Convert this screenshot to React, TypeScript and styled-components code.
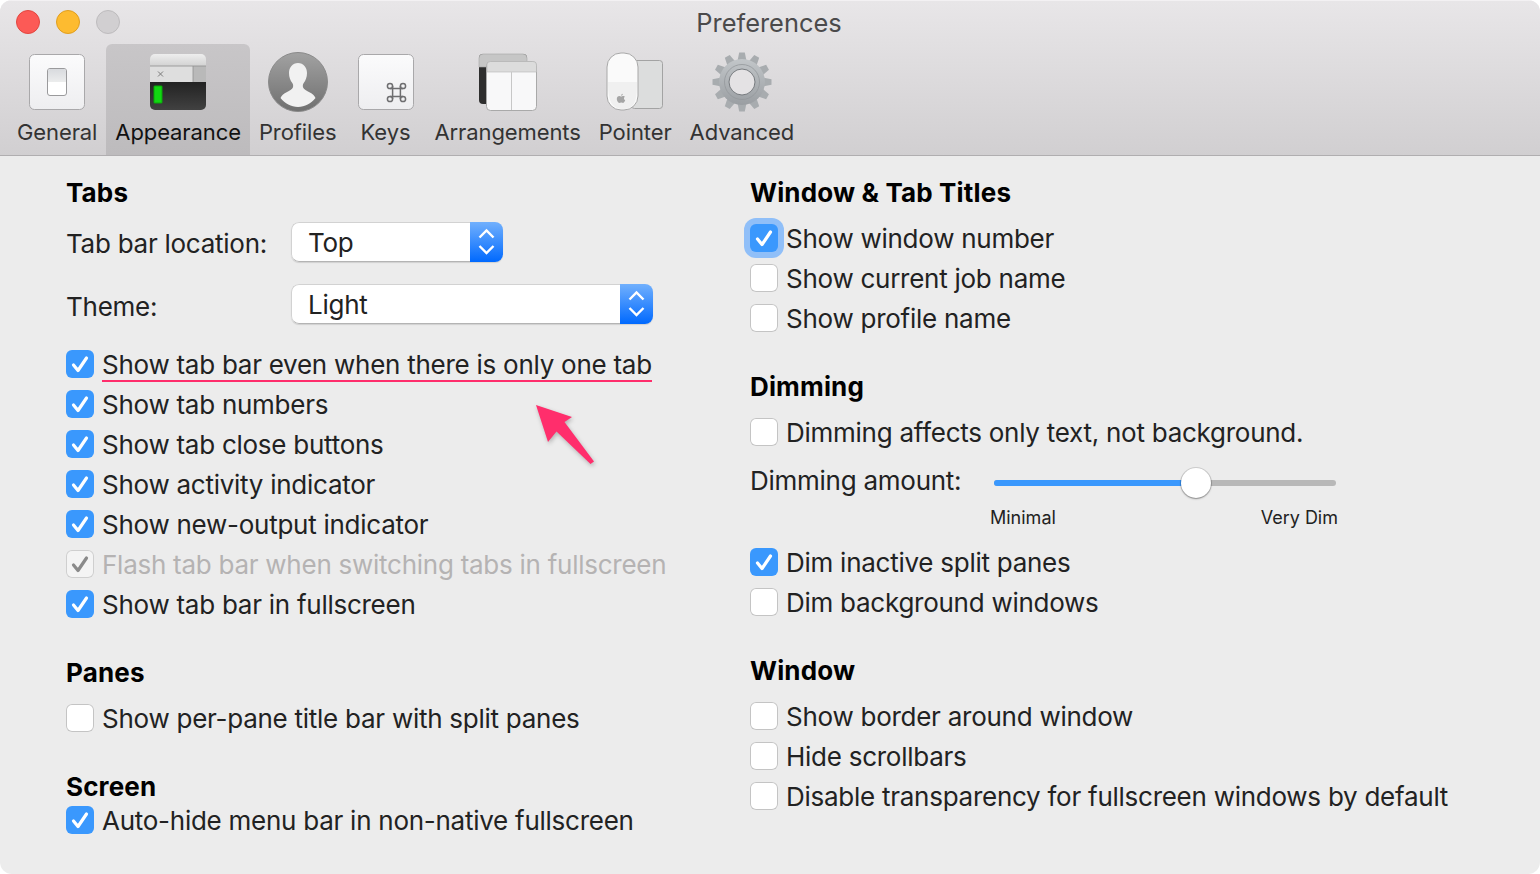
import React from 'react';
import styled, { createGlobalStyle } from 'styled-components';

const GlobalStyle = createGlobalStyle`
  html, body {
    margin: 0;
    padding: 0;
    background: #ffffff;
  }
  body {
    font-family: Inter, "Liberation Sans", sans-serif;
  }
`;

const GeneralIcon = () => (
  <svg width="60" height="60" viewBox="0 0 60 60">
    <defs>
      <linearGradient id="generalBg" x1="0" y1="0" x2="0" y2="1">
        <stop offset="0" stopColor="#fbfbfc" />
        <stop offset="1" stopColor="#eeeef0" />
      </linearGradient>
      <linearGradient id="generalKnob" x1="0" y1="0" x2="0" y2="1">
        <stop offset="0" stopColor="#d8dade" />
        <stop offset="1" stopColor="#eceded" />
      </linearGradient>
    </defs>
    <rect x="2.5" y="2.5" width="55" height="55" rx="5" fill="url(#generalBg)" stroke="#a9a8aa" />
    <rect x="20.5" y="16.5" width="19" height="27" rx="2.5" fill="#ffffff" stroke="#9a9a9c" />
    <path d="M21 19a2 2 0 0 1 2-2h14a2 2 0 0 1 2 2v11H21z" fill="url(#generalKnob)" />
  </svg>
);

const AppearanceIcon = () => (
  <svg width="60" height="60" viewBox="0 0 60 60">
    <defs>
      <linearGradient id="termBody" x1="0" y1="0" x2="0" y2="1">
        <stop offset="0" stopColor="#222222" />
        <stop offset="1" stopColor="#414141" />
      </linearGradient>
      <linearGradient id="termTitle" x1="0" y1="0" x2="0" y2="1">
        <stop offset="0" stopColor="#eeeeee" />
        <stop offset="1" stopColor="#d2d2d2" />
      </linearGradient>
    </defs>
    <path d="M2 30h56v23a5 5 0 0 1-5 5H7a5 5 0 0 1-5-5z" fill="url(#termBody)" />
    <path d="M2 7a5 5 0 0 1 5-5h46a5 5 0 0 1 5 5v7H2z" fill="url(#termTitle)" />
    <rect x="2" y="14" width="56" height="16" fill="#dedede" />
    <rect x="45" y="14" width="13" height="16" fill="#b9b9b9" />
    <path d="M45 14v16M2 14h56" stroke="#8f8f8f" strokeWidth="0.8" />
    <path d="M10 19.5l5 5M15 19.5l-5 5" stroke="#7c7c7c" strokeWidth="1" />
    <rect x="6" y="34" width="8" height="17" rx="0.5" fill="#12d612" stroke="#08a808" />
  </svg>
);

const ProfilesIcon = () => (
  <svg width="60" height="60" viewBox="0 0 60 60">
    <defs>
      <linearGradient id="profileBg" x1="0" y1="0" x2="0" y2="1">
        <stop offset="0" stopColor="#a2a2a2" />
        <stop offset="1" stopColor="#6f6f6f" />
      </linearGradient>
    </defs>
    <circle cx="30" cy="30" r="29.5" fill="url(#profileBg)" stroke="#8a8a8a" />
    <path
      d="M30 11c-5.5 0-9 4.500-9 10 0 4 1.300 7.500 3.300 10 .9 1.100 1.100 2.900 .6 4.500-.6 2-3.500 3.200-6.800 5-2.500 1.300-4.500 3-5.600 5.500C17 51.500 23 55 30 55s13-3.500 17.500-9c-1.100-2.500-3.100-4.200-5.600-5.500-3.300-1.800-6.200-3-6.800-5-.5-1.600-.3-3.400 .6-4.500 2-2.500 3.300-6 3.300-10 0-5.500-3.500-10-9-10z"
      fill="#f1f1f1"
    />
  </svg>
);

const KeysIcon = () => (
  <svg width="60" height="60" viewBox="0 0 60 60">
    <rect x="2.5" y="2.5" width="55" height="55" rx="5" fill="url(#generalBg)" stroke="#a9a8aa" />
    <g fill="none" stroke="#6e6e70" strokeWidth="1.5">
      <path d="M36.6 34V47M44.4 34V47M34 36.6H47M34 44.4H47" />
      <circle cx="34" cy="34" r="2.6" />
      <circle cx="47" cy="34" r="2.6" />
      <circle cx="34" cy="47" r="2.6" />
      <circle cx="47" cy="47" r="2.6" />
    </g>
  </svg>
);

const ArrangementsIcon = () => (
  <svg width="60" height="60" viewBox="0 0 60 60">
    <rect x="1" y="2" width="48" height="50" rx="4" fill="#2e2e2e" />
    <path d="M1 6a4 4 0 0 1 4-4h40a4 4 0 0 1 4 4v9H1z" fill="#c6c6c6" stroke="#a6a6a6" strokeWidth="0.6" />
    <rect x="8.5" y="9.5" width="50" height="49" rx="4" fill="#f8f8f9" stroke="#a9a9a9" />
    <path d="M9 13a3.5 3.5 0 0 1 3.500-3.500h42.500a3.500 3.500 0 0 1 3.500 3.500v7H9z" fill="#dcdcdc" stroke="#b5b5b5" strokeWidth="0.6" />
    <path d="M33.5 20v38" stroke="#c7c7c7" />
  </svg>
);

const PointerIcon = () => (
  <svg width="60" height="60" viewBox="0 0 60 60">
    <rect x="26.5" y="8.5" width="31" height="48" rx="3" fill="#dcdddd" stroke="#a3a3a3" />
    <rect x="2" y="1" width="31" height="57" rx="14" fill="#fafafa" stroke="#a8a8a8" />
    <path d="M3 30c0 18 3 27 15 27s14-9 14-27z" fill="#f0f0f0" />
    <path
      d="M16 44.5c1 0 1.300-.5 2.200-.5 .8 0 1.500 .5 1.700 .8-1.400 .9-1.200 2.900 .3 3.500-.5 1.200-1.300 2.700-2.300 2.700-.7 0-1-.4-1.800-.4s-1.100 .4-1.800 .4c-1.300 0-2.500-2.500-2.500-4 0-1.800 1.100-3 2.600-3 .6 0 1.100 .5 1.600 .5zM16 43.800c0-1 .8-1.900 1.800-2 .1 1.100-.8 2-1.800 2z"
      fill="#a5a5a5"
    />
  </svg>
);

const GEAR_TEETH = Array.from({ length: 12 }, (_, i) => i * 30);

const AdvancedIcon = () => (
  <svg width="60" height="60" viewBox="0 0 60 60">
    <defs>
      <linearGradient id="gearFill" x1="0" y1="0" x2="0" y2="1">
        <stop offset="0" stopColor="#c2c6c9" />
        <stop offset="1" stopColor="#9a9ea2" />
      </linearGradient>
    </defs>
    <g fill="#a8acaf">
      {GEAR_TEETH.map((deg) => (
        <path key={deg} d="M27.2 0.5h5.600l1.800 9h-9.200z" transform={`rotate(${deg} 30 30)`} />
      ))}
    </g>
    <circle cx="30" cy="30" r="23" fill="url(#gearFill)" />
    <circle cx="30" cy="30" r="17.5" fill="none" stroke="#94989c" strokeWidth="0.8" />
    <circle cx="30" cy="30" r="13" fill="#e4e2e4" stroke="#777b7f" strokeWidth="1" />
  </svg>
);

const TABS = [
  { name: 'General', icon: <GeneralIcon /> },
  { name: 'Appearance', icon: <AppearanceIcon />, selected: true },
  { name: 'Profiles', icon: <ProfilesIcon /> },
  { name: 'Keys', icon: <KeysIcon /> },
  { name: 'Arrangements', icon: <ArrangementsIcon /> },
  { name: 'Pointer', icon: <PointerIcon /> },
  { name: 'Advanced', icon: <AdvancedIcon /> },
];

const CheckMark = ({ color = '#ffffff' }: { color?: string }) => (
  <svg width="28" height="28" viewBox="0 0 28 28">
    <path d="M7.5 15l4.500 5.500L20.500 8" fill="none" stroke={color} strokeWidth="3.2" strokeLinecap="round" strokeLinejoin="round" />
  </svg>
);

type OptionProps = {
  label: string;
  checked?: boolean;
  disabled?: boolean;
  focused?: boolean;
  marked?: boolean;
};

const Option: React.FC<OptionProps> = ({ label, checked, disabled, focused, marked }) => (
  <OptionRow>
    <Box $checked={checked} $disabled={disabled} $focused={focused}>
      {checked && <CheckMark color={disabled ? '#8a8a8a' : '#ffffff'} />}
    </Box>
    <OptionLabel $disabled={disabled} $marked={marked}>
      {label}
    </OptionLabel>
  </OptionRow>
);

const Chevrons = () => (
  <svg width="33" height="40" viewBox="0 0 33 40">
    <path d="M9.500 15.500l7-7 7 7M9.500 24l7 7 7-7" fill="none" stroke="#ffffff" strokeWidth="2.400" />
  </svg>
);

const Select: React.FC<{ value: string; width: number }> = ({ value, width }) => (
  <SelectBox style={{ width }}>
    <SelectValue>{value}</SelectValue>
    <Stepper>
      <Chevrons />
    </Stepper>
  </SelectBox>
);

const App: React.FC = () => {
  const dimming = 59;

  return (
    <>
      <GlobalStyle />
      <Window>
        <Toolbar>
          <TitleBar>
            <Lights>
              <Light $color="#fc5a56" $edge="#e2463f" />
              <Light $color="#fdbb30" $edge="#e09e1f" />
              <Light $color="#d1cfd1" $edge="#bdbbbd" />
            </Lights>
            <Title>Preferences</Title>
          </TitleBar>
          <Tabs>
            {TABS.map((tab) => (
              <Tab key={tab.name} $selected={tab.selected}>
                {tab.icon}
                <TabLabel $selected={tab.selected}>{tab.name}</TabLabel>
              </Tab>
            ))}
          </Tabs>
        </Toolbar>

        <Content>
          <LeftColumn>
            <Heading>Tabs</Heading>
            <SelectRow>
              <SelectLabel $nudge={2}>Tab bar location:</SelectLabel>
              <Select value="Top" width={212} />
            </SelectRow>
            <SelectRow $gap={22}>
              <SelectLabel $nudge={5}>Theme:</SelectLabel>
              <Select value="Light" width={362} />
            </SelectRow>
            <OptionList $top={20}>
              <Option checked marked label="Show tab bar even when there is only one tab" />
              <Option checked label="Show tab numbers" />
              <Option checked label="Show tab close buttons" />
              <Option checked label="Show activity indicator" />
              <Option checked label="Show new-output indicator" />
              <Option checked disabled label="Flash tab bar when switching tabs in fullscreen" />
              <Option checked label="Show tab bar in fullscreen" />
            </OptionList>
            <Arrow width="64" height="64" viewBox="0 0 64 64">
              <polygon points="2,1 38,13 30.5,18 60,57.5 56.5,60 22.5,27.5 14,38" fill="#ff2e6c" />
            </Arrow>

            <Section>
              <Heading>Panes</Heading>
              <OptionList>
                <Option label="Show per-pane title bar with split panes" />
              </OptionList>
            </Section>

            <Section>
              <Heading>Screen</Heading>
              <OptionList $top={-4}>
                <Option checked label="Auto-hide menu bar in non-native fullscreen" />
              </OptionList>
            </Section>
          </LeftColumn>

          <RightColumn>
            <Heading>Window &amp; Tab Titles</Heading>
            <OptionList>
              <Option checked focused label="Show window number" />
              <Option label="Show current job name" />
              <Option label="Show profile name" />
            </OptionList>

            <Section>
              <Heading>Dimming</Heading>
              <OptionList>
                <Option label="Dimming affects only text, not background." />
              </OptionList>
              <SliderRow>
                <SliderLabel>Dimming amount:</SliderLabel>
                <Track>
                  <TrackFill style={{ width: `${dimming}%` }} />
                  <Thumb style={{ left: `${dimming}%` }} />
                </Track>
              </SliderRow>
              <TickLabels>
                <span>Minimal</span>
                <span>Very Dim</span>
              </TickLabels>
              <OptionList $top={12}>
                <Option checked label="Dim inactive split panes" />
                <Option label="Dim background windows" />
              </OptionList>
            </Section>

            <Section>
              <Heading>Window</Heading>
              <OptionList>
                <Option label="Show border around window" />
                <Option label="Hide scrollbars" />
                <Option label="Disable transparency for fullscreen windows by default" />
              </OptionList>
            </Section>
          </RightColumn>
        </Content>
      </Window>
    </>
  );
};

const Window = styled.div`
  width: 1540px;
  height: 874px;
  background: #ececec;
  border-radius: 12px;
  overflow: hidden;
  display: flex;
  flex-direction: column;
`;

const Toolbar = styled.header`
  height: 156px;
  box-sizing: border-box;
  border-top: 1px solid #f3f1f3;
  border-bottom: 1px solid #b0aeb0;
  background: linear-gradient(#e8e6e8, #d1cfd1);
  display: flex;
  flex-direction: column;
`;

const TitleBar = styled.div`
  height: 43px;
  flex: none;
  display: flex;
  align-items: center;
  justify-content: center;
  position: relative;
`;

const Lights = styled.div`
  position: absolute;
  left: 16px;
  top: 9px;
  display: flex;
  gap: 16px;
`;

const Light = styled.span<{ $color: string; $edge: string }>`
  width: 24px;
  height: 24px;
  box-sizing: border-box;
  border-radius: 50%;
  background: ${(p) => p.$color};
  border: 1px solid ${(p) => p.$edge};
`;

const Title = styled.div`
  font-size: 25.4px;
  color: #4b4a4b;
  margin-left: -2px;
`;

const Tabs = styled.nav`
  flex: 1;
  display: flex;
  padding-left: 8px;
`;

const Tab = styled.div<{ $selected?: boolean }>`
  min-width: 80px;
  box-sizing: border-box;
  padding: 8px 9px 0;
  display: flex;
  flex-direction: column;
  align-items: center;
  border-radius: 6px 6px 0 0;
  background: ${(p) => (p.$selected ? 'linear-gradient(#c8c6c8, #bdbbbd)' : 'transparent')};
`;

const TabLabel = styled.span<{ $selected?: boolean }>`
  margin-top: 6px;
  font-size: 22px;
  line-height: 28px;
  letter-spacing: -0.1px;
  white-space: nowrap;
  color: ${(p) => (p.$selected ? '#111111' : '#333333')};
`;

const Content = styled.main`
  flex: 1;
  display: grid;
  grid-template-columns: 684px 1fr;
  padding: 20px 0 0 66px;
`;

const LeftColumn = styled.section`
  position: relative;
`;

const RightColumn = styled.section``;

const Section = styled.div`
  margin-top: 32px;
`;

const Heading = styled.h2`
  margin: 0;
  font-size: 26px;
  line-height: 34px;
  font-weight: 700;
  letter-spacing: 0.15px;
  color: #000000;
`;

const SelectRow = styled.div<{ $gap?: number }>`
  margin-top: ${(p) => p.$gap ?? 12}px;
  display: grid;
  grid-template-columns: 225px auto;
  justify-content: start;
  align-items: center;
`;

const SelectLabel = styled.span<{ $nudge?: number }>`
  font-size: 26px;
  letter-spacing: -0.26px;
  color: #222222;
  margin-top: ${(p) => p.$nudge ?? 1}px;
`;

const SelectBox = styled.div`
  height: 40px;
  box-sizing: border-box;
  display: flex;
  border-radius: 8px;
  box-shadow: 0 1px 1px rgba(0, 0, 0, 0.12);
  overflow: hidden;
`;

const SelectValue = styled.span`
  flex: 1;
  box-sizing: border-box;
  padding-left: 16px;
  background: #ffffff;
  border: 1px solid #d2d2d2;
  border-right: none;
  border-bottom-color: #b4b4b4;
  border-radius: 8px 0 0 8px;
  font-size: 26px;
  line-height: 40px;
  letter-spacing: -0.26px;
  color: #222222;
`;

const Stepper = styled.span`
  width: 33px;
  height: 40px;
  flex: none;
  background: linear-gradient(#71b0fd, #0069fe);
`;

const OptionList = styled.div<{ $top?: number }>`
  margin-top: ${(p) => p.$top ?? 8}px;
  display: flex;
  flex-direction: column;
`;

const OptionRow = styled.div`
  height: 40px;
  display: flex;
  align-items: center;
  gap: 8px;
`;

const Box = styled.span<{ $checked?: boolean; $disabled?: boolean; $focused?: boolean }>`
  width: 28px;
  height: 28px;
  flex: none;
  box-sizing: border-box;
  border-radius: 6px;
  background: ${(p) => (p.$disabled ? '#f4f4f4' : p.$checked ? '#3a98fd' : '#ffffff')};
  box-shadow: ${(p) =>
    p.$focused
      ? '0 0 0 6px #90bff8'
      : p.$disabled
        ? 'inset 0 0 0 1px #cfcfcf'
        : p.$checked
          ? 'none'
          : 'inset 0 0 0 1px #c4c4c4'};
`;

const OptionLabel = styled.span<{ $disabled?: boolean; $marked?: boolean }>`
  position: relative;
  font-size: 26px;
  letter-spacing: -0.26px;
  white-space: nowrap;
  color: ${(p) => (p.$disabled ? '#b5b3b3' : '#222222')};

  ${(p) =>
    p.$marked &&
    `
    &::after {
      content: '';
      position: absolute;
      left: 0;
      right: 0;
      bottom: -2px;
      height: 2px;
      background: #ff2e6c;
    }
  `}
`;

const Arrow = styled.svg`
  position: absolute;
  left: 468px;
  top: 228px;
  filter: drop-shadow(1px 2px 2px rgba(0, 0, 0, 0.25));
`;

const SliderRow = styled.div`
  margin-top: 14px;
  height: 34px;
  display: flex;
  align-items: center;
`;

const SliderLabel = styled.span`
  width: 244px;
  flex: none;
  font-size: 26px;
  letter-spacing: -0.26px;
  color: #222222;
  margin-top: -6px;
`;

const Track = styled.div`
  position: relative;
  width: 342px;
  height: 6px;
  border-radius: 3px;
  background: #b8b8b8;
`;

const TrackFill = styled.div`
  height: 100%;
  border-radius: 3px 0 0 3px;
  background: #3a98fd;
`;

const Thumb = styled.div`
  position: absolute;
  top: 50%;
  width: 30px;
  height: 30px;
  margin: -15px 0 0 -15px;
  border-radius: 50%;
  background: #ffffff;
  box-shadow: 0 0 0 1px rgba(0, 0, 0, 0.12), 0 1px 2px rgba(0, 0, 0, 0.35);
`;

const TickLabels = styled.div`
  margin: 6px 0 0 240px;
  width: 348px;
  display: flex;
  justify-content: space-between;
  font-size: 18px;
  line-height: 24px;
  color: #222222;
`;

export default App;
